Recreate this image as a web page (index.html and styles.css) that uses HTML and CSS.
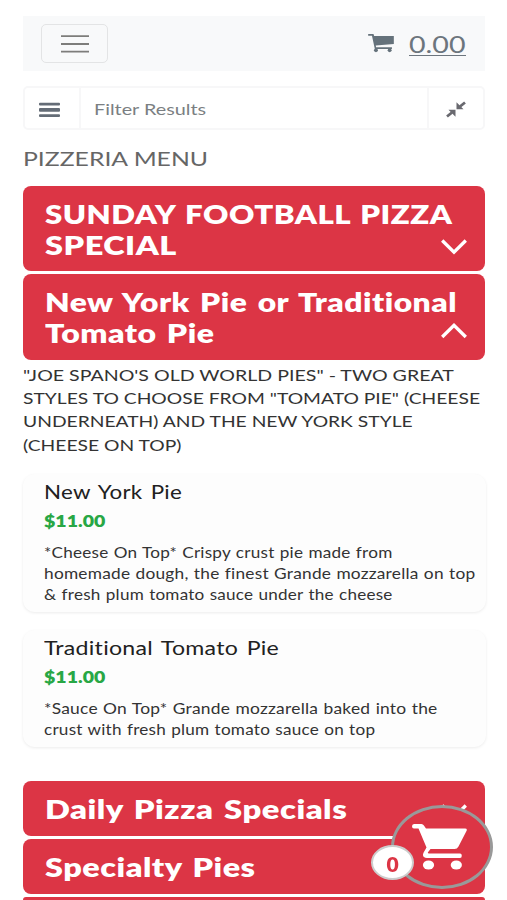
FILE: index.html
```
<!DOCTYPE html>
<html lang="en">
<head>
  <meta charset="UTF-8">
  <meta name="viewport" content="width=device-width, initial-scale=1.0">
  <title>Pizzeria Menu</title>
  <link rel="stylesheet" href="styles.css">
</head>
<body>
  <header class="navbar">
    <button class="toggler" aria-label="Menu">
      <svg width="28" height="18" viewBox="0 0 28 18"><path d="M0 1.2h28M0 9h28M0 16.700h28" stroke="#7d7d7b" stroke-width="1.8"/></svg>
    </button>
    <a class="cart-link">
      <svg width="26" height="19" viewBox="0 0 27 20" fill="#65727b">
        <path d="M0 0h5.6l.7 2H27v8.6L8 12.2l.3 1.8H25v1.8H7L4 1.8H0z"/>
        <ellipse cx="8.2" cy="17.2" rx="2.1" ry="1.9"/><ellipse cx="22.6" cy="17.2" rx="2.1" ry="1.9"/>
      </svg>
      <span class="total"><span class="line w-total">0.00</span></span>
    </a>
  </header>

  <div class="filter">
    <button class="filter-btn list-btn" aria-label="Categories">
      <svg width="21" height="16" viewBox="0 0 21 16" fill="#646c76"><rect y="0.8" width="21" height="2.8" rx="1"/><rect y="6" width="21" height="3.8" rx="1"/><rect y="12.2" width="21" height="2.8" rx="1"/></svg>
    </button>
    <div class="filter-input"><span class="line w-filter">Filter Results</span></div>
    <button class="filter-btn" aria-label="Collapse">
      <svg width="20" height="17" viewBox="0 0 20 17"><path d="M1 15.5l5-4M19 1.5l-5 4" stroke="#69696f" stroke-width="2.8"/><path d="M2.500 8.700h7v7zM17.500 8.300h-7v-7z" fill="#69696f"/></svg>
    </button>
  </div>

  <h1 class="menu-title"><span class="line w-menu">PIZZERIA MENU</span></h1>

  <section class="category">
    <h2><span class="line w-sunday">SUNDAY FOOTBALL PIZZA</span><span class="line w-special">SPECIAL</span></h2>
    <svg class="chevron" width="26" height="16" viewBox="0 0 26 16"><path d="M1.2 1.5L13 13.2 24.8 1.5"/></svg>
  </section>
  <section class="category">
    <h2><span class="line w-newyork">New York Pie or Traditional</span><span class="line w-tomato">Tomato Pie</span></h2>
    <svg class="chevron up" width="26" height="16" viewBox="0 0 26 16"><path d="M1.2 14L13 2.3 24.8 14"/></svg>
  </section>

  <p class="intro">
    <span class="line w-intro1">"JOE SPANO'S OLD WORLD PIES" - TWO GREAT</span>
    <span class="line w-intro2">STYLES TO CHOOSE FROM "TOMATO PIE" (CHEESE</span>
    <span class="line w-intro2">UNDERNEATH) AND THE NEW YORK STYLE</span>
    <span class="line w-intro2">(CHEESE ON TOP)</span>
  </p>

  <article class="item">
    <h3><span class="line w-item1">New York Pie</span></h3>
    <div class="price"><span class="line w-price">$11.00</span></div>
    <p>
      <span class="line w-desc1">*Cheese On Top* Crispy crust pie made from</span>
      <span class="line w-desc2">homemade dough, the finest Grande mozzarella on top</span>
      <span class="line w-desc3">&amp; fresh plum tomato sauce under the cheese</span>
    </p>
  </article>
  <article class="item">
    <h3><span class="line w-item2">Traditional Tomato Pie</span></h3>
    <div class="price"><span class="line w-price">$11.00</span></div>
    <p>
      <span class="line w-desc4">*Sauce On Top* Grande mozzarella baked into the</span>
      <span class="line w-desc5">crust with fresh plum tomato sauce on top</span>
    </p>
  </article>

  <section class="category after-items">
    <h2><span class="line w-daily">Daily Pizza Specials</span></h2>
    <svg class="chevron" width="26" height="16" viewBox="0 0 26 16"><path d="M1.2 1.5L13 13.2 24.8 1.5"/></svg>
  </section>
  <section class="category">
    <h2><span class="line w-specialty">Specialty Pies</span></h2>
  </section>
  <section class="category cut"></section>

  <!-- floating cart -->
  <div class="fab">
    <svg width="55" height="46" viewBox="0 0 55 46" fill="#fff">
      <path d="M2 0h7.500q1.500 0 2.400 1.500L14 4.600H53q2.500 0 1.600 2.200L46.500 22.500q-1.300 2.500-4 2.500H18.500l-2.500 3.300q-.6 1.200 1 1.200H48q1.800 0 1.800 2.200T48 34H15q-5.500-.5-3.500-5.200L14.500 23.500 6.500 4.600H2Q0 4.400 0 2.300T2 0z"/>
      <ellipse cx="16.500" cy="41" rx="5.600" ry="4.600"/><ellipse cx="44.300" cy="41" rx="5.600" ry="4.600"/>
    </svg>
    <span class="badge">0</span>
  </div>
</body>
</html>
```
FILE: styles.css
```
* {
  box-sizing: border-box;
}
body {
  display: flex;
  flex-direction: column;
  margin: 0;
  padding: 16px 22px 0 23px;
  height: 900px;
  overflow: hidden;
  background: #fff;
  color: #333;
  font-family: Lato, "Liberation Sans", sans-serif;
  font-variant-ligatures: none;
}
body > * {
  flex: none;
}
h1, h2, h3, p {
  margin: 0;
  font-weight: 400;
}
button {
  padding: 0;
  background: none;
  border: 0;
}
svg {
  display: block;
}

/* wide lettering, one stretch value for each line */
.line {
  display: block;
  width: max-content;
  white-space: nowrap;
  transform: scaleX(var(--stretch, 1.2));
  transform-origin: 0 50%;
}
.w-total { --stretch: 1.243; }
.w-filter { --stretch: 1.238; }
.w-menu { --stretch: 1.238; }
.w-sunday { --stretch: 1.2; }
.w-special { --stretch: 1.249; }
.w-newyork { --stretch: 1.223; }
.w-tomato { --stretch: 1.231; }
.w-daily { --stretch: 1.261; }
.w-specialty { --stretch: 1.246; }
.w-intro1 { --stretch: 1.223; }
.w-intro2 { --stretch: 1.204; }
.w-item1 { --stretch: 1.208; }
.w-item2 { --stretch: 1.25; }
.w-price { --stretch: 1.22; }
.w-desc1 { --stretch: 1.19; }
.w-desc2 { --stretch: 1.2; }
.w-desc3 { --stretch: 1.187; }
.w-desc4 { --stretch: 1.208; }
.w-desc5 { --stretch: 1.189; }

.navbar {
  display: flex;
  align-items: center;
  justify-content: space-between;
  height: 55px;
  padding: 0 19px 0 18px;
  background: #f8f9fa;
}
.toggler {
  display: flex;
  align-items: center;
  justify-content: center;
  width: 67px;
  height: 39px;
  border: 1px solid #e3e4e5;
  border-radius: 5px;
}
.cart-link {
  display: flex;
  align-items: center;
  gap: 15px;
  color: #6c757d;
}
.total {
  width: 57px;
  height: 24px;
  margin-top: 1px;
  border-bottom: 1px solid #6c757d;
  font-size: 23px;
  line-height: 24px;
}

.filter {
  display: flex;
  height: 44px;
  margin-top: 15px;
  border: 2px solid #f7f7f8;
  border-radius: 5px;
}
.filter-btn {
  display: flex;
  align-items: center;
  justify-content: center;
  width: 54px;
  padding-top: 3px;
}
.list-btn {
  padding-right: 5px;
}
.filter-input {
  flex: 1;
  padding-left: 13px;
  border: solid #f7f7f8;
  border-width: 0 2px;
  color: #7b7f83;
  font-size: 16px;
  line-height: 41px;
}

.menu-title {
  height: 56px;
  color: #666;
  font-size: 20px;
  line-height: 57px;
}

.category {
  display: flex;
  align-items: flex-end;
  justify-content: space-between;
  min-height: 55px;
  margin-bottom: 3px;
  padding: 13px 18px 11px 22px;
  border-radius: 8px;
  background: #dc3545;
  color: #fff;
}
.category h2 {
  font-size: 26px;
  font-weight: 800;
  line-height: 30.7px;
  letter-spacing: 0.4px;
  word-spacing: 2px;
}
.chevron {
  flex: none;
  margin-bottom: 5px;
  fill: none;
  stroke: #fff;
  stroke-width: 3.3;
}
.chevron.up {
  margin-bottom: 10px;
}
/* next category, only its top edge is on screen */
.category.cut {
  flex: 1;
  min-height: 0;
  margin: 0;
  padding: 0;
  border-radius: 8px 8px 0 0;
}

.intro {
  font-size: 16px;
  line-height: 23.3px;
}

.item {
  margin: 18px -1px 0 0;
  padding: 5px 10px 6px 21px;
  border-radius: 12px;
  background: #fdfdfd;
  box-shadow: 0 1px 3px rgba(0, 0, 0, 0.08);
}
.item h3 {
  color: #212121;
  font-size: 18.5px;
  line-height: 27px;
  letter-spacing: 0.2px;
  word-spacing: 2px;
}
.price {
  color: #28a745;
  font-size: 16px;
  font-weight: 800;
  line-height: 30px;
}
.item p {
  padding-top: 7px;
  font-size: 14.4px;
  line-height: 20.9px;
  letter-spacing: 0.2px;
  word-spacing: 0.5px;
}
.after-items {
  margin-top: 34px;
}

.fab {
  position: fixed;
  right: 14px;
  bottom: 11px;
  width: 102px;
  height: 84px;
  padding: 16px 0 0 18px;
  border: 3px solid #999;
  border-radius: 50%;
  background: #dc3545;
}
.badge {
  position: absolute;
  left: -23px;
  top: 37px;
  width: 43px;
  height: 35px;
  border: 2px solid #ccc;
  border-radius: 50%;
  background: #fff;
  color: #dc3545;
  font-size: 21px;
  font-weight: 800;
  line-height: 33px;
  text-align: center;
}
```
